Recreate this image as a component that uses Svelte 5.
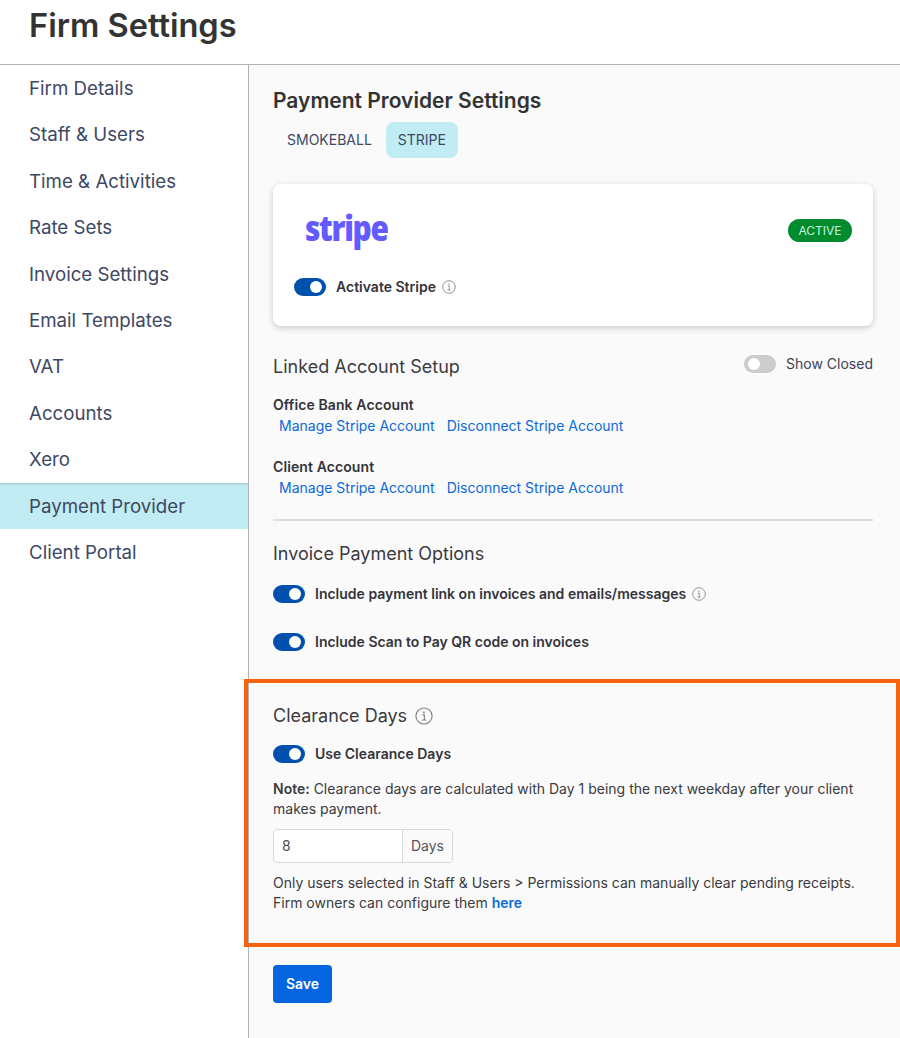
<script>
  const nav = ['Firm Details','Staff & Users','Time & Activities','Rate Sets','Invoice Settings','Email Templates','VAT','Accounts','Xero','Payment Provider','Client Portal'];
  const active = 'Payment Provider';
  const accounts = ['Office Bank Account','Client Account'];
</script>

{#snippet info(size)}
  <svg class="info" width={size} height={size} viewBox="0 0 16 16" aria-hidden="true">
    <circle cx="8" cy="8" r="7.2" fill="none" stroke="#77787c" stroke-width="0.9"/>
    <path d="M6.7 7h1.6v4.4M6.4 11.5h3.3" fill="none" stroke="#77787c" stroke-width="0.9"/>
    <circle cx="7.9" cy="4.7" r="0.8" fill="#77787c"/>
  </svg>
{/snippet}

{#snippet toggle(on)}
  <span class="toggle" class:on><span class="knob"></span></span>
{/snippet}

<div class="page">
  <header><h1>Firm Settings</h1></header>
  <div class="body">
    <nav>
      {#each nav as item}
        <div class="nav-item" class:active={item === active}>{item}</div>
      {/each}
    </nav>
    <main>
      <h2>Payment Provider Settings</h2>
      <div class="tabs">
        <div class="tab first">SMOKEBALL</div>
        <div class="tab selected">STRIPE</div>
      </div>

      <section class="card">
        <div class="card-top">
          <span class="logo">stripe</span>
          <span class="badge">ACTIVE</span>
        </div>
        <div class="row">
          {@render toggle(true)}
          <strong>Activate Stripe</strong>
          {@render info(14)}
        </div>
      </section>

      <div class="linked-head">
        <h3>Linked Account Setup</h3>
        <div class="show-closed">{@render toggle(false)}<span>Show Closed</span></div>
      </div>
      {#each accounts as a}
        <div class="account">
          <strong>{a}</strong>
          <div class="links"><a href="#m">Manage Stripe Account</a><a href="#d">Disconnect Stripe Account</a></div>
        </div>
      {/each}
      <hr />

      <h3 class="options-title">Invoice Payment Options</h3>
      <div class="row option">
        {@render toggle(true)}
        <strong>Include payment link on invoices and emails/messages</strong>
        {@render info(14)}
      </div>
      <div class="row option second">
        {@render toggle(true)}
        <strong>Include Scan to Pay QR code on invoices</strong>
      </div>
      <hr class="lower" />

      <section class="clearance">
        <span class="highlight"></span>
        <div class="clear-title"><h3>Clearance Days</h3>{@render info(18)}</div>
        <div class="row use">
          {@render toggle(true)}
          <strong>Use Clearance Days</strong>
        </div>
        <p class="note"><strong>Note:</strong> Clearance days are calculated with Day 1 being the next weekday after your client makes payment.</p>
        <div class="input-group">
          <span class="value">8</span>
          <span class="unit">Days</span>
        </div>
        <p class="perm">Only users selected in Staff &amp; Users &gt; Permissions can manually clear pending receipts. Firm owners can configure them <a href="#h">here</a></p>
      </section>

      <button type="button" class="save">Save</button>
    </main>
  </div>
</div>

<style>
  :global(body) { margin: 0; background: #fff; }
  .page {
    width: 900px; height: 1038px; overflow: hidden;
    display: flex; flex-direction: column;
    font-family: Inter, "Liberation Sans", sans-serif;
    color: #3b3b3f; font-size: 14px;
  }
  header { height: 64px; flex: none; border-bottom: 1px solid #b3b3b3; padding-left: 29px; box-sizing: content-box; }
  h1 { margin: 0; font-size: 32.6px; line-height: 51px; font-weight: 600; color: #333; }
  .body { flex: 1; display: flex; min-height: 0; }
  nav { width: 248px; flex: none; border-right: 1px solid #b3b3b3; }
  .nav-item { height: 46.4px; line-height: 47.5px; padding-left: 29px; font-size: 18.7px; color: #3d4863; }
  .nav-item.active { background: #c1ecf4; box-shadow: inset 0 3px 3px -2px rgba(0,0,0,.16); }
  main { flex: 1; min-width: 0; background: #fafafa; padding: 0 27px 0 24px; }
  h2 { margin: 24px 0 0; font-size: 21px; line-height: 24px; font-weight: 600; color: #333; }
  .tabs { display: flex; margin-top: 9px; }
  .tab { height: 36px; line-height: 36px; padding: 0 12px; border-radius: 8px; color: #3d4863; font-size: 14px; }
  .tab.first { padding: 0 14px; }
  .tab.selected { background: #c1ecf4; }
  .card {
    margin-top: 26px; height: 142px; box-sizing: border-box; padding: 21px 21px 0;
    background: #fff; border-radius: 8px; box-shadow: 0 2px 6px rgba(0,0,0,.2);
  }
  .card-top { display: flex; justify-content: space-between; align-items: center; height: 50px; padding-left: 11px; }
  .logo {
    font-family: "Open Sans", sans-serif; font-weight: 800; font-size: 36px; line-height: 46px; height: 50px;
    color: #635bff; letter-spacing: -1.6px; display: block; transform: scaleX(.83); transform-origin: left center;
  }
  .badge {
    width: 64px; height: 23px; line-height: 23px; text-align: center; border-radius: 12px;
    background: #008b2f; color: #c8f4dc; font-size: 12px;
  }
  .row { display: flex; align-items: center; gap: 10px; }
  .card .row { margin-top: 23px; }
  .row strong { font-weight: 600; font-size: 14px; line-height: 16px; margin-top: -1px; color: #34343a; }
  .row .info, .clear-title .info { flex: none; }
  .row .info { margin-left: -4px; }
  .toggle {
    width: 32px; height: 18px; border-radius: 9px; background: #ccc; flex: none;
    display: flex; align-items: center; padding: 0 4px; box-sizing: border-box;
  }
  .toggle.on { background: #0051ad; justify-content: flex-end; }
  .knob { width: 12px; height: 12px; border-radius: 50%; background: #fff; }
  h3 { margin: 0; font-size: 18px; line-height: 24px; font-weight: 400; color: #3b3b3f; }
  .linked-head { display: flex; justify-content: space-between; margin-top: 29px; height: 24px; }
  .show-closed { display: flex; align-items: center; gap: 10px; height: 18px; color: #3d4255; }
  .show-closed span:last-child { margin-top: -1px; }
  .account { margin-top: 16px; line-height: 20px; }
  .account + .account { margin-top: 21px; }
  .account strong { font-weight: 600; display: block; color: #34343a; letter-spacing: .1px; }
  .links { display: flex; gap: 12px; padding-left: 6px; margin-top: 1px; }
  a { color: #0b69d9; text-decoration: none; }
  hr { border: 0; height: 2px; background: #dedede; margin: 21px 0 0; }
  .options-title { margin-top: 21px; }
  .option { margin-top: 19px; }
  .option.second { margin-top: 30px; }
  hr.lower { margin-top: 28px; }
  .clearance { position: relative; margin-top: 0; height: 264px; padding-top: 23px; box-sizing: border-box; }
  .highlight {
    position: absolute; top: -2px; left: -29px; right: -27px; bottom: -2px;
    border: 4px solid #f4630d; pointer-events: none;
  }
  .clear-title { display: flex; align-items: center; gap: 8px; height: 24px; }
  .row.use { margin-top: 17px; }
  .note { margin: 16px 0 0; line-height: 20px; }
  .note strong { font-weight: 600; }
  .input-group {
    width: 180px; height: 34px; margin-top: 10px; display: flex; box-sizing: border-box;
    border: 1px solid #d9d9d9; border-radius: 4px; background: #fff; line-height: 32px;
  }
  .value { flex: 1; padding-left: 8px; color: #4b4b50; }
  .unit { width: 50px; box-sizing: border-box; text-align: center; border-left: 1px solid #d9d9d9; background: #fafafa; border-radius: 0 3px 3px 0; color: #55555a; }
  .perm { margin: 10px 0 0; line-height: 20px; }
  .perm a { font-weight: 600; }
  .save {
    display: block; margin-top: 20px; width: 59px; height: 38px; border: 0; border-radius: 4px;
    background: #0565de; color: #fff; font: 600 14px Inter, sans-serif; padding: 0 0 2px;
  }
</style>
